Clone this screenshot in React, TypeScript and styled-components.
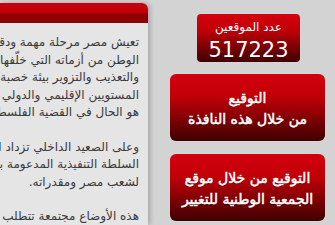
import React from "react";
import styled, { createGlobalStyle } from "styled-components";

const GlobalStyle = createGlobalStyle`
  html, body {
    margin: 0;
    padding: 0;
    background: #d3d3d3;
    overflow: hidden;
  }
  body {
    font-family: "DejaVu Sans", "Noto Sans", sans-serif;
  }
`;

const Page = styled.div`
  display: flex;
  width: 335px;
  height: 225px;
  overflow: hidden;
`;

const Article = styled.div`
  direction: rtl;
  width: 148px;
  margin-top: 3px;
  background: #e5e5e5;
  border-top-right-radius: 6px;
  box-shadow: 2px 0 5px rgba(0, 0, 0, 0.22);
  overflow: hidden;
  flex: none;
`;

const ArticleHeader = styled.div`
  height: 20px;
  background: linear-gradient(#c9000b 0%, #c2000a 45%, #930003 55%, #8c0002 100%);
`;

const ArticleBody = styled.div`
  width: 300px;
  padding: 11px 9px 0 0;
  color: #3a3a3a;
  font-size: 12px;
  line-height: 17.5px;
  white-space: nowrap;
  text-align: right;
`;

const Paragraph = styled.p`
  margin: 0 0 17px;
`;

const Side = styled.div`
  width: 187px;
  flex: none;
  display: flex;
  flex-direction: column;
  align-items: flex-start;
  padding-top: 14px;
`;

const redGradient = `linear-gradient(#d3000c 0%, #bf0008 35%, #7a0004 70%, #3e0000 100%)`;

const Counter = styled.div`
  direction: rtl;
  box-sizing: border-box;
  width: 103px;
  height: 48px;
  margin-left: 49px;
  padding-top: 6px;
  border-radius: 4px;
  background: ${redGradient};
  box-shadow: 0 0 1px rgba(220, 240, 245, 0.9);
  color: #fff;
  display: flex;
  flex-direction: column;
  align-items: center;
  gap: 4px;
  flex: none;
`;

const CounterLabel = styled.div`
  font-size: 12px;
  line-height: 14px;
`;

const CounterValue = styled.div`
  font-size: 21px;
  line-height: 24px;
`;

const SignButton = styled.a<{ $top: number }>`
  direction: rtl;
  box-sizing: border-box;
  width: 155px;
  height: 67px;
  flex: none;
  margin-top: ${(p) => p.$top}px;
  margin-left: 22px;
  border-radius: 6px;
  background: ${redGradient};
  box-shadow: 0 0 1px rgba(220, 240, 245, 0.9);
  color: #fff;
  font-weight: normal;
  font-size: 14px;
  line-height: 21px;
  -webkit-text-stroke: 0.5px #fff;
  white-space: nowrap;
  text-align: center;
  text-shadow: 0 1px 1px rgba(0, 0, 0, 0.35);
  display: flex;
  flex-direction: column;
  align-items: center;
  justify-content: center;
  text-decoration: none;
  padding-top: 2px;
`;

export default function App() {
  return (
    <>
      <GlobalStyle />
      <Page>
        <Article>
          <ArticleHeader />
          <ArticleBody>
            <Paragraph>
              تعيش مصر مرحلة مهمة ودقيقة من تاريخها تتطلب
              <br />
              الوطن من أزماته التي خلّفها عقود من الفساد
              <br />
              والتعذيب والتزوير بيئة خصبة لتراجع مكانة مصر على
              <br />
              المستويين الإقليمي والدولي وتهميش دورها كما
              <br />
              هو الحال في القضية الفلسطينية وقضايا المنطقة
            </Paragraph>
            <Paragraph>
              وعلى الصعيد الداخلي تزداد الأوضاع سوءاً في ظل
              <br />
              السلطة التنفيذية المدعومة بقوانين استثنائية
              <br />
              لشعب مصر ومقدراته.
            </Paragraph>
            <Paragraph>هذه الأوضاع مجتمعة تتطلب وقفة جادة من الجميع</Paragraph>
          </ArticleBody>
        </Article>
        <Side>
          <Counter>
            <CounterLabel>عدد الموقعين</CounterLabel>
            <CounterValue>517223</CounterValue>
          </Counter>
          <SignButton href="#" $top={12}>
            <span>التوقيع</span>
            <span>من خلال هذه النافذة</span>
          </SignButton>
          <SignButton href="#" $top={13}>
            <span>التوقيع من خلال موقع</span>
            <span>الجمعية الوطنية للتغيير</span>
          </SignButton>
        </Side>
      </Page>
    </>
  );
}
